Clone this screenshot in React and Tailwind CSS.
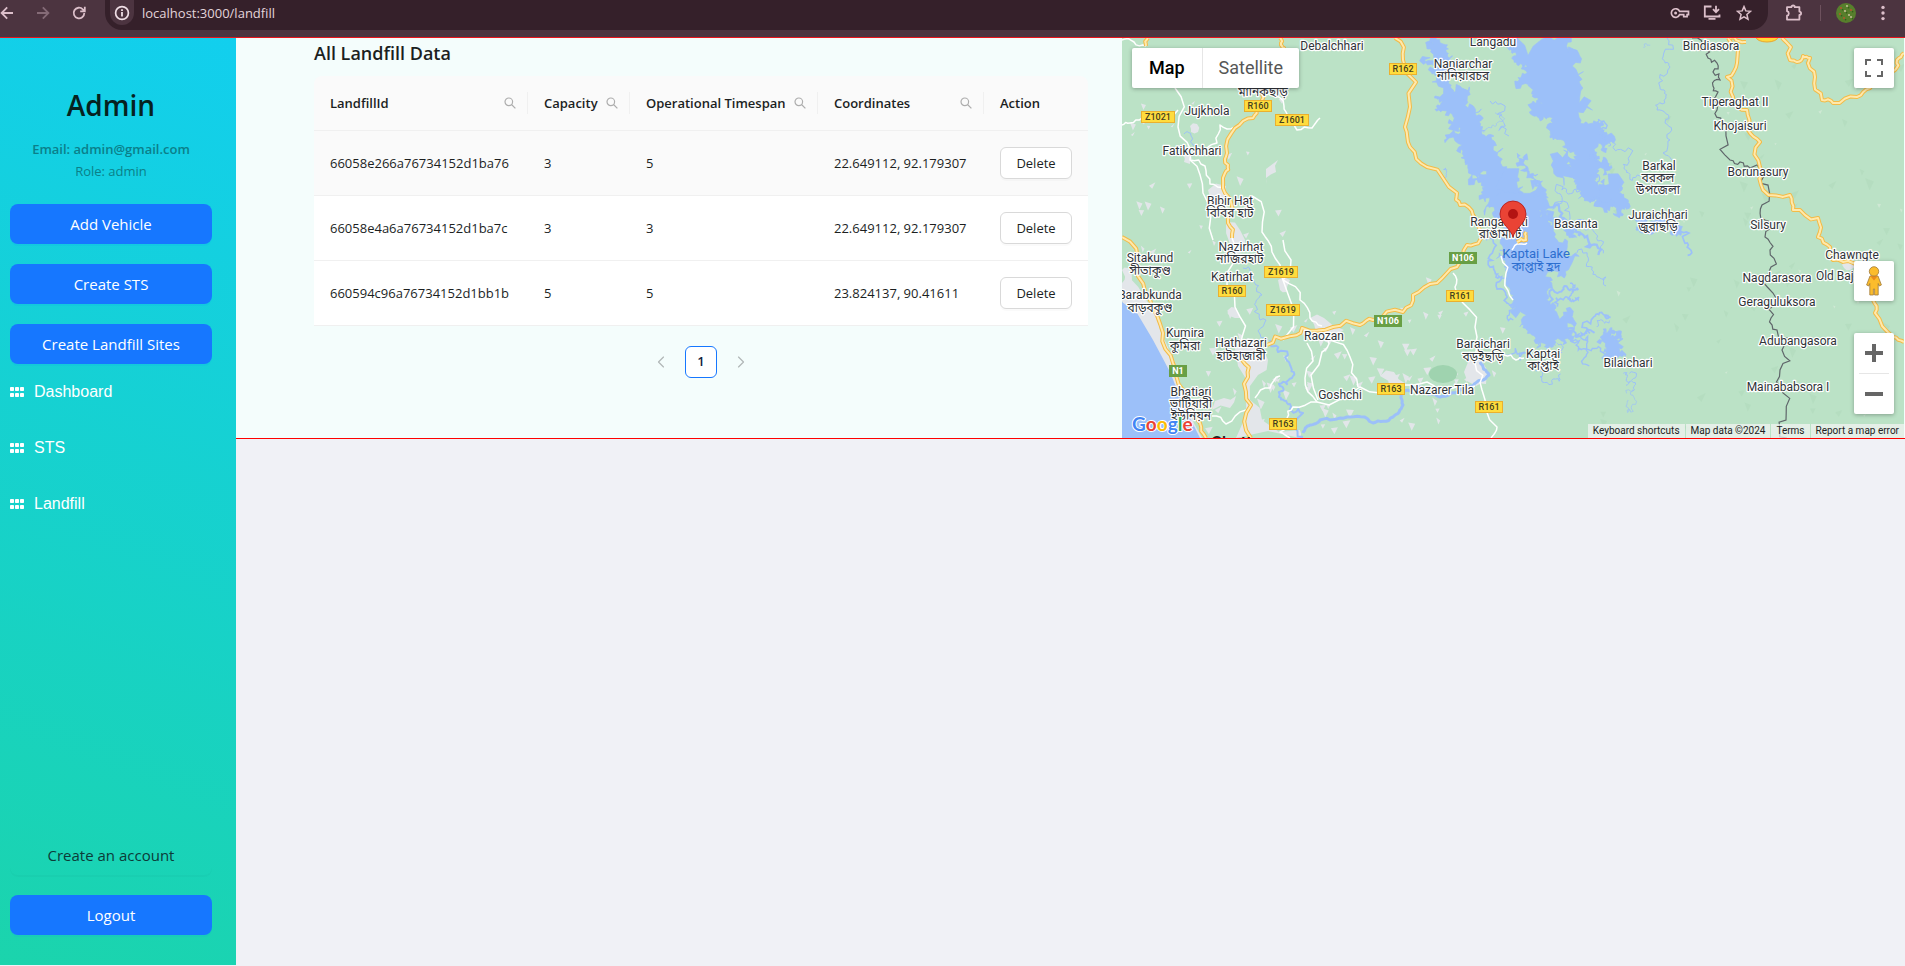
import React from "react";
import { ChevronLeft, ChevronRight } from "lucide-react";

const UI = "font-['Open_Sans',sans-serif]";

/* ---------- browser bar ---------- */

function BarButton({ label, children }) {
  return (
    <button type="button" aria-label={label} className="flex size-6 shrink-0 items-center justify-center">
      {children}
    </button>
  );
}

const line = { fill: "none", stroke: "currentColor", strokeWidth: 1.8 };

function BrowserBar() {
  return (
    <header className="flex h-[37px] items-start bg-[#4c3440] text-[#dcbfca]">
      <div className="flex h-[26px] items-center">
        <button type="button" aria-label="Back" className="flex w-[18px] items-center">
          <svg width="14" height="14" viewBox="0 0 14 14" {...line}>
            <path d="M13 7H1.8M7.2 1.4 1.6 7l5.6 5.6" />
          </svg>
        </button>
        <button type="button" aria-label="Forward" className="ml-[18px] flex w-[14px] items-center text-[#856b77]">
          <svg width="14" height="14" viewBox="0 0 14 14" {...line}>
            <path d="M1 7h11.2M6.8 1.4 12.4 7l-5.6 5.6" />
          </svg>
        </button>
        <button type="button" aria-label="Reload" className="ml-[22px] flex w-[14px] items-center">
          <svg width="14" height="14" viewBox="0 0 14 14" {...line}>
            <path d="M12.3 7A5.3 5.3 0 1 1 10.8 3.3L12.6 5M12.8 .8v4.6H8.2" />
          </svg>
        </button>
      </div>
      <div className="ml-[19px] flex h-[30px] flex-1 items-start rounded-b-[17px] bg-[#35202a]">
        <span className="ml-[5px] flex h-[25px] w-6 items-end justify-center rounded-b-full bg-[#4c3440] pb-[4px]">
          <svg width="16" height="16" viewBox="0 0 16 16" fill="none" stroke="#f0dfe6" strokeWidth="1.7">
            <circle cx="8" cy="8" r="6.4" />
            <path d="M8 7v4.4M8 4.3v1.7" strokeWidth="1.8" />
          </svg>
        </span>
        <input
          aria-label="Address"
          defaultValue="localhost:3000/landfill"
          className={`ml-2 h-[26px] min-w-0 flex-1 bg-transparent text-[13px] text-[#e3d4da] outline-none ${UI}`}
        />
        <div className="mr-[12px] flex h-[26px] items-center gap-2">
          <BarButton label="Saved passwords">
            <svg width="20" height="14" viewBox="0 0 20 14" {...line} strokeWidth="1.7">
              <path d="M9.6 5.4h8.9v3.3h-1.4v2h-3.4v-2H9.6a4.3 4.3 0 1 1 0-3.3z" />
              <circle cx="5.6" cy="7" r="1.5" fill="currentColor" stroke="none" />
            </svg>
          </BarButton>
          <BarButton label="Install app">
            <svg width="18" height="16" viewBox="0 0 18 16" {...line}>
              <path d="M8.5 1.5H1.8v10h14.7V9.5M13 .8v6M10 4.2l3 3 3-3M5.5 13.8h7" />
            </svg>
          </BarButton>
          <BarButton label="Bookmark this page">
            <svg width="16" height="16" viewBox="0 0 16 16" {...line} strokeWidth="1.5">
              <path d="m8 1.6 1.8 4.3 4.7.4-3.6 3.1 1.1 4.8L8 11.8l-4 2.4 1.1-4.8L1.5 6.3l4.7-.4z" />
            </svg>
          </BarButton>
        </div>
      </div>
      <div className="ml-[14px] flex h-[26px] items-center">
        <BarButton label="Extensions">
          <svg width="18" height="18" viewBox="0 0 18 18" {...line}>
            <path d="M2 3.2h4.4a1.7 1.7 0 0 1 3.4 0h4.6v4.4a1.7 1.7 0 0 1 0 3.4v4.6H2v-3.9a2.3 2.3 0 0 0 0-4.5z" strokeLinejoin="round" />
          </svg>
        </BarButton>
        <span className="mx-[14px] h-4 w-px bg-[#6d515d]" />
        <button type="button" aria-label="Profile" className="flex size-[22px] items-center justify-center">
          <svg width="20" height="20" viewBox="0 0 20 20">
            <circle cx="10" cy="10" r="10" fill="#577f2c" />
            {[[5, 5], [11, 3], [15, 7], [9, 8], [4, 11], [13, 12], [8, 15], [15, 14]].map(([x, y], i) => (
              <g key={i}>
                <circle cx={x} cy={y} r=".9" fill={i % 2 ? "#d9c9a8" : "#c4502d"} />
                <circle cx={x + 1.6} cy={y + 1.8} r=".8" fill="#33591c" />
              </g>
            ))}
          </svg>
        </button>
        <button type="button" aria-label="Menu" className="ml-[14px] mr-[10px] flex w-6 items-center justify-center">
          <svg width="4" height="16" viewBox="0 0 4 16" fill="currentColor">
            <circle cx="2" cy="2.4" r="1.7" />
            <circle cx="2" cy="8" r="1.7" />
            <circle cx="2" cy="13.6" r="1.7" />
          </svg>
        </button>
      </div>
    </header>
  );
}

/* ---------- sidebar ---------- */

function PrimaryButton({ children }) {
  return (
    <button type="button" className="h-10 w-full rounded-lg bg-[#1677ff] text-[15px] text-white shadow-[0_2px_0_rgba(5,145,255,0.1)]">
      {children}
    </button>
  );
}

function GridIcon() {
  return (
    <svg width="14" height="10" viewBox="0 0 14 10" fill="currentColor">
      {[0, 5, 10].map((x) => [0, 6].map((y) => <rect key={`${x}-${y}`} x={x} y={y} width="4" height="4" rx=".8" />))}
    </svg>
  );
}

function Sidebar() {
  return (
    <aside className={`mb-px flex w-[236px] shrink-0 flex-col bg-[linear-gradient(200deg,#12cfee_0%,#1bd4ac_100%)] pl-[10px] pr-6 ${UI}`}>
      <div className="pt-[46px] text-center">
        <h1 className="text-[28px] leading-[42px] font-semibold text-[#06221f]">Admin</h1>
        <p className="mt-3 text-[13px] leading-[22px] font-semibold text-[#0b7f8a]">Email: admin@gmail.com</p>
        <p className="text-[13px] leading-[22px] text-[#0b8088]">Role: admin</p>
      </div>
      <div className="mt-[22px] flex flex-col gap-5">
        <PrimaryButton>Add Vehicle</PrimaryButton>
        <PrimaryButton>Create STS</PrimaryButton>
        <PrimaryButton>Create Landfill Sites</PrimaryButton>
      </div>
      <nav className="mt-4 flex flex-col gap-8 font-['Liberation_Sans',Arial,sans-serif] text-base leading-6 text-white">
        {["Dashboard", "STS", "Landfill"].map((item) => (
          <a key={item} href={`#${item.toLowerCase()}`} className="flex items-center gap-[10px]">
            <GridIcon />
            {item}
          </a>
        ))}
      </nav>
      <div className="mt-auto flex flex-col gap-5 pb-[30px]">
        <button type="button" className="h-10 w-full rounded-lg text-[15px] text-[#0c3b38] shadow-[0_2px_0_rgba(0,0,0,0.02)]">
          Create an account
        </button>
        <PrimaryButton>Logout</PrimaryButton>
      </div>
    </aside>
  );
}

/* ---------- table ---------- */

const columns = [
  { name: "LandfillId", width: "w-[214px]", search: true },
  { name: "Capacity", width: "w-[102px]", search: true },
  { name: "Operational Timespan", width: "w-[188px]", search: true },
  { name: "Coordinates", width: "w-[166px]", search: true },
  { name: "Action", width: "w-[104px]" },
];

const rows = [
  ["66058e266a76734152d1ba76", "3", "5", "22.649112, 92.179307"],
  ["66058e4a6a76734152d1ba7c", "3", "3", "22.649112, 92.179307"],
  ["660594c96a76734152d1bb1b", "5", "5", "23.824137, 90.41611"],
];

function SearchIcon() {
  return (
    <svg width="12" height="12" viewBox="0 0 12 12" fill="none" stroke="currentColor" strokeWidth="1.2">
      <circle cx="4.8" cy="4.8" r="3.8" />
      <path d="M7.5 7.5 11.4 11.4" />
    </svg>
  );
}

function LandfillTable() {
  return (
    <section className={`min-w-0 pl-[78px] pr-[34px] text-[#1c1f1f] ${UI}`}>
      <h2 className="text-[18px] leading-[30px] font-semibold">All Landfill Data</h2>
      <table className="mt-2 w-full table-fixed border-separate border-spacing-0 text-left text-[13px] leading-[22px]">
        <thead>
          <tr className="h-[55px]">
            {columns.map((c, i) => (
              <th
                key={c.name}
                scope="col"
                className={`border-b border-[#f0f0f0] bg-[#fafafa] p-0 font-semibold ${c.width} ${i === 0 ? "rounded-tl-lg" : ""} ${i === 4 ? "rounded-tr-lg" : ""}`}
              >
                <div className={`flex h-[22px] items-center justify-between pl-4 pr-[11px] ${i < 4 ? "border-r border-[#f0f0f0]" : ""}`}>
                  <span className="whitespace-nowrap">{c.name}</span>
                  {c.search && (
                    <button type="button" aria-label={`Search ${c.name}`} className="text-[#adadad]">
                      <SearchIcon />
                    </button>
                  )}
                </div>
              </th>
            ))}
          </tr>
        </thead>
        <tbody>
          {rows.map((row, r) => (
            <tr key={row[0]} className={`h-[65px] ${r === 0 ? "bg-[#fafafa]" : "bg-white"}`}>
              {row.map((cell, i) => (
                <td key={i} className="border-b border-[#f0f0f0] px-4 py-0 whitespace-nowrap">{cell}</td>
              ))}
              <td className="border-b border-[#f0f0f0] px-4 py-0">
                <button type="button" className="h-8 w-full rounded-md border border-[#d9d9d9] bg-white shadow-[0_2px_0_rgba(0,0,0,0.02)]">
                  Delete
                </button>
              </td>
            </tr>
          ))}
        </tbody>
      </table>
      <div className="mt-5 flex justify-center gap-2 text-[13px]">
        <button type="button" aria-label="Previous page" disabled className="flex size-8 items-center justify-center text-[#b0b6b6]">
          <ChevronLeft size={20} strokeWidth={1.4} />
        </button>
        <button type="button" aria-current="page" className="size-8 rounded-md border border-[#1677ff] bg-white font-semibold text-[#14213d]">
          1
        </button>
        <button type="button" aria-label="Next page" disabled className="flex size-8 items-center justify-center text-[#b0b6b6]">
          <ChevronRight size={20} strokeWidth={1.4} />
        </button>
      </div>
    </section>
  );
}

/* ---------- map drawing ---------- */

function random(seed) {
  let s = seed;
  return () => {
    s = (s * 16807) % 2147483647;
    return s / 2147483647 - 0.5;
  };
}

// Splits each segment again and again and shifts the midpoints sideways,
// which turns a coarse outline into a natural looking coast or road.
function rough(text, { amp = 0.4, depth = 2, closed = false, seed = 7 } = {}) {
  const rand = random(seed);
  let pts = text.trim().split(/\s+/).map((p) => p.split(",").map(Number));
  if (closed) pts.push(pts[0]);
  for (let d = 0; d < depth; d++) {
    const next = [pts[0]];
    for (let i = 1; i < pts.length; i++) {
      const [ax, ay] = pts[i - 1];
      const [bx, by] = pts[i];
      const k = rand() * amp;
      next.push([(ax + bx) / 2 - (by - ay) * k, (ay + by) / 2 + (bx - ax) * k], [bx, by]);
    }
    pts = next;
  }
  return "M" + pts.map(([x, y]) => `${x.toFixed(1)} ${y.toFixed(1)}`).join("L") + (closed ? "Z" : "");
}

const coast = { amp: 1.4, depth: 3, closed: true };

// Northern lake branches, on a grid three times as fine as the map's.
const northLake = [
  "60,10 50,30 65,50 40,85 75,90 80,120 75,180 100,195 75,220 120,230 125,265 145,295 105,320 140,345 165,370 175,400 230,405 175,430 205,440 218,475 250,500 270,540 300,600 330,640 460,640 430,585 390,545 370,505 340,470 300,455 318,425 290,400 270,365 250,330 240,295 218,272 200,240 190,210 172,180 150,150 125,158 95,140 110,110 130,95 128,60 110,50 90,20",
  "290,20 320,5 470,5 492,40 498,100 512,165 520,230 545,262 565,250 582,290 570,318 610,322 588,350 552,340 560,370 592,380 600,402 562,400 550,430 580,462 600,450 612,480 632,450 655,492 628,505 600,515 570,512 540,500 510,470 500,450 488,425 430,375 485,395 498,372 470,360 458,332 430,312 418,282 412,245 388,248 360,215 398,202 380,185 370,162 315,145 345,115 352,92 320,80 318,60 298,42",
  "322,352 340,380 384,415 378,450 400,480 428,530 470,560 500,604 470,598 430,545 395,500 368,460 362,425 332,388",
];

const southLake = [
  "60,0 180,-20 205,30 242,70 252,110 290,150 300,200 252,212 246,255 230,300 252,330 300,322 312,360 292,380 330,400 300,420 262,415 250,440 222,430 200,445 180,400 150,380 140,320 120,280 110,220 98,180 110,150 90,130 120,110 90,60",
  "400,404 416,392 430,390 440,420 448,392 460,440 466,470 440,470 432,502 415,480 398,470 406,440",
  "358,0 385,20 412,8 440,30 460,42 478,25 470,0",
  "496,62 540,74 600,72 632,92 600,100 560,95 520,100 498,90",
];

const northArms = [
  [3, "440,470 440,500 428,520"],
  [3, "440,470 470,460 510,465"],
  [3, "595,330 612,320 632,340 640,385 655,410 690,420"],
  [3, "240,195 262,235 275,250 297,300"],
  [2, "255,230 262,260 240,275 222,290"],
  [4, "565,250 572,280 590,300"],
  [3, "530,370 555,365 590,372 598,398"],
  [4, "540,420 560,455 590,470"],
  [3, "100,400 108,412 104,424"],
  [2, "700,34 712,28 720,26"],
];

const southArms = [
  [7, "190,-10 230,20 270,50 300,82 340,105 350,140 385,165"],
  [3, "250,20 300,50 345,90 380,115 400,160"],
  [3, "320,160 350,190 380,230 408,258"],
  [5, "48,120 60,165 75,215 95,230 105,275 112,310"],
  [4, "110,310 125,330 130,360"],
  [6, "240,305 270,275 295,268 325,270"],
  [5, "262,320 285,292 308,300 328,292"],
  [6, "290,405 330,408 350,392 372,400"],
  [4, "330,408 350,432 385,440 402,470"],
  [4, "300,422 325,450 350,462 358,498"],
  [5, "360,400 372,350 402,345 422,352"],
  [3, "380,380 400,365 420,362"],
  [3, "262,430 268,450 276,456"],
  [3, "460,520 472,530 468,556"],
  [3, "478,520 490,548 486,570"],
  [2, "470,580 492,592 490,634 468,620 474,600"],
  [3, "196,512 210,530 245,542 272,522"],
  [4, "100,462 150,482 180,470"],
  [5, "625,90 645,130 653,166"],
  [4, "300,250 308,270 300,300"],
];

const streams = [
  [1, "1667,38 1663,57 1670,67 1660,87 1666,98 1657,110 1665,123 1670,140 1663,153 1672,160"],
  [3, "1303,433 1310,425 1320,420 1347,417 1373,423 1393,417 1403,405 1403,390 1420,387 1440,397 1460,390 1473,386 1489,375 1480,362"],
  [2, "1303,437 1303,413 1290,404 1279,397 1279,384 1292,378 1290,365 1278,352 1270,340"],
  [1, "1268,340 1266,320 1256,306 1262,295 1250,280 1243,268"],
  [1, "1184,134 1192,140 1200,148"],
];

const whiteRoads = [
  "1175,88 1178,127 1190,160 1203,193 1213,240",
  "1122,125 1130,123 1142,118 1178,110",
  "1235,127 1220,125 1217,143 1207,148",
  "1190,160 1205,166 1210,184 1225,190",
  "1270,94 1284,106 1290,116 1297,130 1312,128 1320,118",
  "1232,238 1234,262 1235,307 1240,347",
  "1283,240 1283,280 1283,340",
  "1283,280 1300,300 1310,318 1322,326",
  "1252,196 1262,232 1272,252 1283,280",
  "1453,273 1455,287 1463,303 1477,337 1475,363 1482,390 1497,427 1491,438",
  "1287,418 1293,407 1317,402 1360,387 1400,385 1427,382 1453,388 1475,386",
  "1330,340 1350,357 1358,387",
  "1307,343 1305,378 1317,402",
  "1328,340 1322,352 1318,400",
  "1504,355 1516,360 1524,358",
  "1255,398 1270,388 1280,376",
  "1212,416 1226,424 1246,410",
  "1287,418 1280,432 1290,438",
  "1501,256 1505,280 1513,300",
  "1512,250 1520,244 1527,243",
  "1122,40 1134,42 1146,46",
];

const yellowRoads = [
  "1122,237 1137,267 1150,300 1163,333 1173,363 1183,390 1200,423 1206,438",
  "1280,38 1281,45 1284,48 1262,94 1257,107 1253,118 1235,128 1227,153 1228,165 1225,173 1225,193 1228,223 1232,238",
  "1242,360 1248,377 1251,405 1251,438",
  "1267,345 1287,337 1302,328 1333,327 1360,325 1373,320 1403,312 1413,295 1437,283 1457,267 1467,245 1480,240 1492,236",
  "1395,38 1403,60 1410,107 1405,127 1410,147 1427,167 1457,193 1460,205 1473,215 1480,230 1500,236",
  "1728,38 1737,63 1727,77 1733,97 1747,110 1748,130 1760,142 1760,167 1763,190 1790,195 1793,210 1818,218 1818,237 1830,247 1833,260 1853,263 1873,300 1875,313 1893,337 1904,342",
  "1782,38 1790,60 1797,62 1803,56 1810,58 1815,77 1822,100 1833,103 1857,97 1870,88 1895,70 1897,60 1904,53",
  "1517,242 1526,240 1526,232",
  "1146,46 1148,38",
  "1730,38 1738,41 1746,42",
];

const towns = [
  "1122,300 1128,276 1146,300 1160,330 1172,368 1190,404 1202,438 1192,438 1176,404 1160,368 1140,332",
  "1234,345 1262,345 1268,360 1258,375 1250,400 1262,420 1300,430 1300,438 1236,438 1246,390 1238,366",
  "1310,318 1324,318 1344,330 1330,344 1316,332",
  "1184,156 1192,158 1190,164 1184,162",
  "1208,190 1226,186 1228,200 1214,200",
  "1190,126 1197,124 1198,132 1191,132",
  "1464,372 1480,358 1486,384 1476,386",
  "1226,222 1240,230 1246,250 1234,256 1230,244",
  "1228,310 1236,308 1240,318 1230,316",
  "1278,280 1290,280 1286,292 1280,290",
  "1380,376 1394,372 1406,384 1390,390",
  "1266,184 1278,160 1276,172 1266,178",
  "1212,410 1224,398 1236,396 1230,408",
  "1842,262 1856,262 1850,270 1844,268",
  "1122,270 1128,268 1132,282 1124,284",
];

const borderLine =
  "1692,38 1700,50 1708,46 1708,58 1717,63 1713,72 1720,80 1713,86 1718,92 1717,110 1722,122 1726,136 1730,160 1740,162 1750,168 1760,183 1762,205 1765,220 1765,237 1770,250 1771,267 1773,293 1765,308 1771,318 1777,330 1782,350 1780,370 1783,393 1786,420 1787,438";

const shields = [
  ["R162", 1403, 69], ["R160", 1258, 106], ["Z1021", 1158, 117], ["Z1601", 1292, 120],
  ["Z1619", 1281, 272], ["R160", 1232, 291], ["Z1619", 1283, 310], ["R161", 1460, 296],
  ["R163", 1391, 389], ["R161", 1489, 407], ["R163", 1283, 424],
  ["N106", 1463, 258, true], ["N106", 1388, 321, true], ["N1", 1178, 371, true],
];

const places = [
  ["Debalchhari", 1332, 50], ["Langadu", 1493, 46], ["Naniarchar", 1463, 68], ["নানিয়ারচর", 1463, 80],
  ["মানিকছড়ি", 1263, 96], ["Jujkhola", 1207, 115], ["Fatikchhari", 1192, 155], ["Bibir Hat", 1230, 205],
  ["বিবির হাট", 1230, 217], ["Rangamati", 1499, 226], ["রাঙামাটি", 1500, 238], ["Nazirhat", 1241, 251],
  ["নাজিরহাট", 1240, 263], ["Sitakund", 1150, 262], ["সীতাকুণ্ড", 1150, 275], ["Katirhat", 1232, 281],
  ["Barabkunda", 1150, 299], ["বাড়বকুণ্ড", 1150, 312], ["Kumira", 1185, 337], ["কুমিরা", 1185, 350],
  ["Hathazari", 1241, 347], ["হাটহাজারী", 1241, 360], ["Raozan", 1324, 340], ["Baraichari", 1483, 348],
  ["বড়ইছড়ি", 1483, 361], ["Bhatiari", 1191, 396], ["ভাটিয়ারী", 1191, 408], ["ইউনিয়ন", 1191, 420],
  ["Goshchi", 1340, 399], ["Nazarer Tila", 1442, 394], ["Kaptai", 1543, 358], ["কাপ্তাই", 1543, 370],
  ["Bilaichari", 1628, 367], ["Basanta", 1576, 228], ["Barkal", 1659, 170], ["বরকল", 1658, 182],
  ["উপজেলা", 1658, 194], ["Juraichhari", 1658, 219], ["জুরাছড়ি", 1658, 231], ["Bindiasora", 1711, 50],
  ["Tiperaghat II", 1735, 106], ["Khojaisuri", 1740, 130], ["Borunasury", 1758, 176], ["Silsury", 1768, 229],
  ["Chawngte", 1852, 259], ["Nagdarasora", 1777, 282], ["Old Bajek", 1841, 280], ["Geraguluksora", 1777, 306],
  ["Adubangasora", 1798, 345], ["Mainababsora I", 1788, 391],
];

// Small fields scattered over the plains and hills.
function fieldPath(count, seed, x0, y0, w, h, size) {
  const rand = random(seed);
  let d = "";
  for (let i = 0; i < count; i++) {
    const x = x0 + (rand() + 0.5) * w;
    const y = y0 + (rand() + 0.5) * h;
    const a = size * (0.5 + Math.abs(rand()));
    d += `M${x.toFixed(1)} ${y.toFixed(1)}l${a.toFixed(1)} ${(rand() * size).toFixed(1)}l${(-a * 0.5).toFixed(1)} ${a.toFixed(1)}z`;
  }
  return d;
}

function Lake({ x, y, shores, arms, seed }) {
  return (
    <g transform={`translate(${x} ${y}) scale(.3333)`}>
      {shores.map((s, i) => (
        <path key={i} d={rough(s, { ...coast, seed: seed + i * 31 })} fill="#9cc0f9" stroke="#9cc0f9" strokeWidth="2" />
      ))}
      {arms.map(([w, s], i) => (
        <path key={i} d={rough(s, { amp: 1.1, depth: 3, seed: seed + i * 17 })} fill="none" stroke="#9cc0f9" strokeWidth={w} />
      ))}
    </g>
  );
}

function MapDrawing() {
  return (
    <svg
      viewBox="1122 38 782 400"
      preserveAspectRatio="xMidYMid slice"
      className="block h-full w-full font-[Roboto,'Noto_Sans_Bengali',sans-serif]"
      role="img"
      aria-label="Map around Kaptai Lake"
    >
      <rect x="1122" y="38" width="782" height="400" fill="#bbe2c6" />
      <path d={fieldPath(60, 91, 1600, 60, 300, 370, 9)} fill="#b2dbbe" opacity=".7" />
      <path d={fieldPath(18, 33, 1600, 60, 300, 370, 4)} fill="#cfe8d4" />
      <path d={fieldPath(26, 17, 1130, 80, 150, 180, 7)} fill="#e2e6e9" />
      <path d={fieldPath(75, 53, 1205, 300, 240, 132, 8)} fill="#e2e6e9" />
      <path d={fieldPath(16, 71, 1400, 250, 100, 170, 7)} fill="#e2e6e9" />
      <ellipse cx="1443" cy="374" rx="14" ry="9" fill="#9fd3af" />
      {towns.map((t, i) => (
        <path key={i} d={rough(t, { amp: 0.5, depth: 1, closed: true, seed: i + 3 })} fill="#e3e6ea" />
      ))}
      <path d="M1122 302L1137 313L1153 340L1161 355L1170 372L1178 392L1187 412L1200 438H1122Z" fill="#9cc0f9" />
      <Lake x={1410} y={36} shores={northLake} arms={northArms} seed={11} />
      <Lake x={1470} y={200} shores={southLake} arms={southArms} seed={23} />
      {streams.map(([w, s], i) => (
        <path key={i} d={rough(s, { amp: w > 2.5 ? 0.3 : 0.9, depth: 3, seed: i * 17 + 5 })} fill="none" stroke="#9cc0f9" strokeWidth={w} strokeLinejoin="round" />
      ))}
      {whiteRoads.map((s, i) => (
        <path key={i} d={rough(s, { seed: i + 40 })} fill="none" stroke="#fff" strokeWidth="1.5" strokeLinejoin="round" />
      ))}
      <path d={rough(borderLine, { amp: 0.9, depth: 2, seed: 19 })} fill="none" stroke="#5f666a" strokeWidth="1.2" />
      {["#f3bb47", "#ffe9ac"].map((color, layer) => (
        <g key={color} fill="none" stroke={color} strokeWidth={layer ? 2 : 4} strokeLinejoin="round">
          {yellowRoads.map((s, i) => (
            <path key={i} d={rough(s, { amp: 0.45, seed: i + 80 })} />
          ))}
        </g>
      ))}
      <ellipse cx="1767" cy="37" rx="11" ry="5" fill="#ffd83b" stroke="#eaa72b" />
      {shields.map(([name, x, y, green], i) => {
        const w = name.length * 6 + (name.length === 2 ? 5 : 3);
        return (
          <g key={i}>
            <rect x={x - w / 2} y={y - 5.5} width={w} height="11" fill={green ? "#689f45" : "#ffdc3d"} stroke={green ? "#689f45" : "#eab02f"} />
            <text x={x} y={y + 3} textAnchor="middle" fontSize="9" fontWeight={green ? 700 : 500} fill={green ? "#fff" : "#43401f"}>
              {name}
            </text>
          </g>
        );
      })}
      <g textAnchor="middle" fontSize="12" fill="#2f3338" stroke="#fff" strokeWidth="2.4" strokeLinejoin="round" paintOrder="stroke">
        {places.map(([name, x, y]) => (
          <text key={`${name}${y}`} x={x} y={y}>{name}</text>
        ))}
      </g>
      <text x="1211" y="448" fontSize="17" fontWeight="500" fill="#222">Chattogram</text>
      <g textAnchor="middle" fill="#2e6fd0" fontSize="12">
        <text x="1536" y="258" fontSize="13">Kaptai Lake</text>
        <text x="1536" y="271">কাপ্তাই হ্রদ</text>
      </g>
      <path d="M1513 237C1511 229 1500 223 1500 214a13 13 0 0 1 26 0C1526 223 1515 229 1513 237Z" fill="#ea4335" stroke="#b31412" strokeWidth=".8" />
      <circle cx="1513" cy="214" r="5" fill="#b31412" />
    </svg>
  );
}

function Pegman() {
  return (
    <svg width="18" height="30" viewBox="0 0 18 30" stroke="#a07a3a" strokeWidth=".8">
      <path d="M5 10h8l3.4 9-2.2 1-1-2.5V29H9.6v-6H8.4v6H4.8V17.5l-1 2.5-2.2-1z" fill="#fbbc2c" />
      <path d="M5 9.8h8L9 14.6z" fill="#ea8a1c" stroke="none" />
      <circle cx="9" cy="5.4" r="4.7" fill="#fbbc2c" />
    </svg>
  );
}

const control = "bg-white shadow-[0_1px_4px_rgba(0,0,0,0.3)]";

function MapPanel() {
  return (
    <section className="relative h-[400px] min-w-0 overflow-hidden font-[Roboto,sans-serif]">
      <MapDrawing />
      <div className={`absolute top-[10px] left-[10px] flex h-10 rounded-[2px] text-lg ${control}`}>
        <button type="button" className="border-r border-[#e6e6e6] px-[17px] font-medium text-black">Map</button>
        <button type="button" className="px-4 text-[#565656]">Satellite</button>
      </div>
      <button type="button" aria-label="Toggle fullscreen" className={`absolute top-[10px] right-[10px] flex size-10 items-center justify-center rounded-[2px] ${control}`}>
        <svg width="18" height="18" viewBox="0 0 18 18" fill="none" stroke="#666" strokeWidth="2">
          <path d="M1 6V1h5M12 1h5v5M17 12v5h-5M6 17H1v-5" />
        </svg>
      </button>
      <div className="absolute right-[10px] bottom-6 flex flex-col gap-8">
        <button type="button" aria-label="Street View" className={`flex size-10 items-center justify-center rounded-[2px] ${control}`}>
          <Pegman />
        </button>
        <div className={`flex w-10 flex-col items-center rounded-[2px] ${control}`}>
          <button type="button" aria-label="Zoom in" className="flex size-10 items-center justify-center">
            <svg width="18" height="18" viewBox="0 0 18 18" fill="#666"><path d="M7 0h4v7h7v4h-7v7H7v-7H0V7h7z" /></svg>
          </button>
          <span className="h-px w-[30px] bg-[#e6e6e6]" />
          <button type="button" aria-label="Zoom out" className="flex size-10 items-center justify-center">
            <svg width="18" height="4" viewBox="0 0 18 4" fill="#666"><path d="M0 0h18v4H0z" /></svg>
          </button>
        </div>
      </div>
      <a
        href="#google"
        aria-label="Google"
        className="absolute bottom-0 left-[10px] flex font-[Lato,sans-serif] text-[19px] leading-[28px] font-bold [paint-order:stroke] [-webkit-text-stroke:2px_#fff]"
      >
        <span className="text-[#4285f4]">G</span>
        <span className="text-[#ea4335]">o</span>
        <span className="text-[#fbbc05]">o</span>
        <span className="text-[#4285f4]">g</span>
        <span className="text-[#34a853]">l</span>
        <span className="text-[#ea4335]">e</span>
      </a>
      <div className="absolute right-0 bottom-0 flex h-[14px] gap-px text-[10px] leading-[14px] text-[#222]">
        {["Keyboard shortcuts", "Map data ©2024", "Terms", "Report a map error"].map((t) => (
          <a key={t} href="#map" className="bg-[#f5f5f5]/70 px-[5px]">{t}</a>
        ))}
      </div>
    </section>
  );
}

export default function App() {
  return (
    <div className="flex min-h-screen flex-col bg-[#f0f1f6]">
      <BrowserBar />
      <div className="h-px bg-[#e8141c]" />
      <div className="flex flex-1">
        <Sidebar />
        <main className="min-w-0 flex-1">
          <div className="grid grid-cols-[minmax(0,886fr)_minmax(0,782fr)] border-b border-[#ff0000] bg-[#f4fdfc] pr-px">
            <LandfillTable />
            <MapPanel />
          </div>
        </main>
      </div>
    </div>
  );
}
